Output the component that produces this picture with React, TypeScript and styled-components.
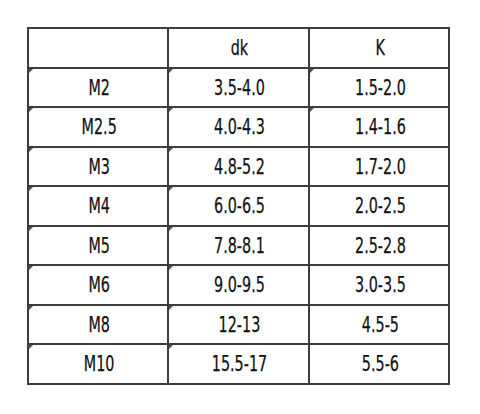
import React from 'react'
import styled, { createGlobalStyle } from 'styled-components'

const GlobalStyle = createGlobalStyle`
  html, body {
    margin: 0;
    padding: 0;
    background: #fff;
  }
  body {
    font-family: "DejaVu Sans", sans-serif;
  }
`

const rows: [string, string, string][] = [
  ['M2', '3.5-4.0', '1.5-2.0'],
  ['M2.5', '4.0-4.3', '1.4-1.6'],
  ['M3', '4.8-5.2', '1.7-2.0'],
  ['M4', '6.0-6.5', '2.0-2.5'],
  ['M5', '7.8-8.1', '2.5-2.8'],
  ['M6', '9.0-9.5', '3.0-3.5'],
  ['M8', '12-13', '4.5-5'],
  ['M10', '15.5-17', '5.5-6'],
]

const App: React.FC = () => {
  return (
    <Page>
      <GlobalStyle />
      <Grid>
        <Cell />
        <Cell>
          <Text>dk</Text>
        </Cell>
        <Cell>
          <Text>K</Text>
        </Cell>
        {rows.map((row, r) =>
          row.map((value, c) => (
            <Cell key={`${r}-${c}`} $mark={c < 2 || r < 2}>
              <Text>{value}</Text>
            </Cell>
          ))
        )}
      </Grid>
    </Page>
  )
}

const Page = styled.div`
  width: 480px;
  height: 414px;
  padding: 27px 0 0 27px;
  box-sizing: border-box;
`

const Grid = styled.div`
  display: grid;
  grid-template-columns: 138px 139px 138px;
  grid-auto-rows: 37.5px;
  gap: 2px;
  padding: 2px;
  width: fit-content;
  background: #3d3d3d;
`

const Cell = styled.div<{ $mark?: boolean }>`
  position: relative;
  display: flex;
  align-items: center;
  justify-content: center;
  padding-left: 2px;
  padding-top: 1px;
  background: #fff;
  color: #111;
  &::before {
    content: '';
    display: ${p => (p.$mark ? 'block' : 'none')};
    position: absolute;
    left: 0;
    top: 0;
    width: 0;
    height: 0;
    border-top: 4px solid #2f6b2f;
    border-right: 4px solid transparent;
  }
`

const Text = styled.span`
  display: inline-block;
  font-size: 21px;
  font-stretch: condensed;
  transform: scaleX(0.76);
  -webkit-text-stroke: 0.25px #111;
  white-space: nowrap;
`

export default App
